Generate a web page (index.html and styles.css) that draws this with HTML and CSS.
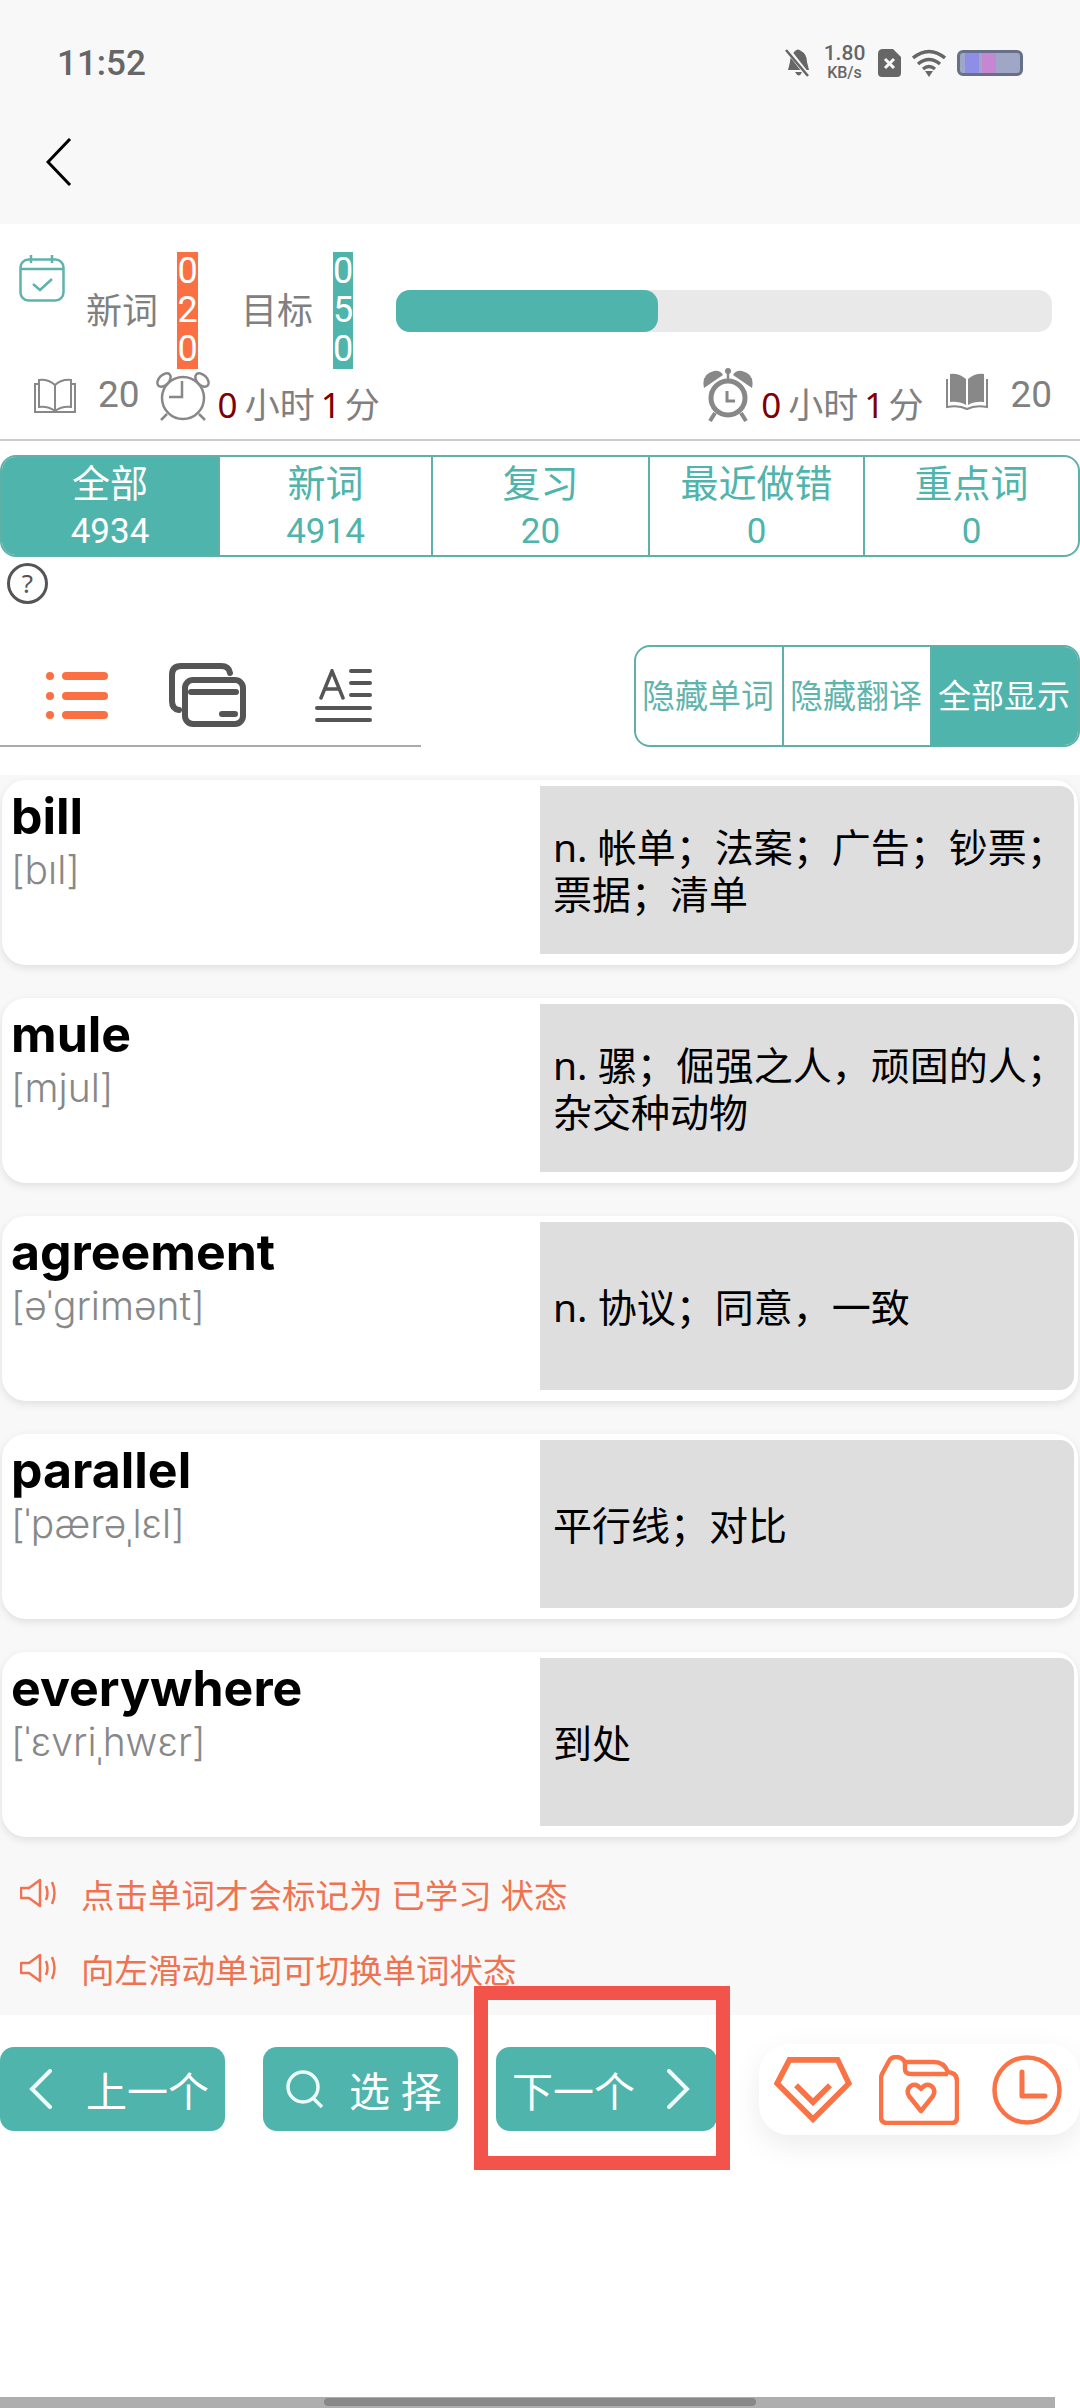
FILE: index.html
```html
<!DOCTYPE html>
<html lang="zh-CN">
<head>
    <meta charset="UTF-8">
    <title>单词列表</title>
    <link rel="stylesheet" href="styles.css">
</head>
<body>
<div class="page">
    <header class="header">
        <div class="status-bar">
            <span class="time">11:52</span>
            <div class="status-icons">
                <svg class="ic-bell" width="26" height="30" viewBox="0 0 26 30">
                    <path d="M10 3 Q13 0 16 3 Q22 6 22 14 L24 22 H3 L5 14 Q5 8 10 3 Z M10 24 H17 Q14 31 10 24 Z" fill="#666"/>
                    <path d="M2 1 L24 29" stroke="#f8f8f8" stroke-width="5"/>
                    <path d="M1 2 L23 28" stroke="#666" stroke-width="2.5"/>
                </svg>
                <div class="speed"><span>1.80</span><span class="speed-unit">KB/s</span></div>
                <svg class="ic-sim" width="23" height="28" viewBox="0 0 23 28">
                    <path d="M5 0 H15 L23 8 V24 Q23 28 19 28 H4 Q0 28 0 24 V5 Q0 0 5 0 Z" fill="#666"/>
                    <path d="M7 10 L16 19 M16 10 L7 19" stroke="#f8f8f8" stroke-width="3"/>
                </svg>
                <svg width="34" height="28" viewBox="0 0 34 28">
                    <g fill="none" stroke="#666" stroke-width="3.5">
                        <path d="M1 9 Q17 -4 33 9"/>
                        <path d="M6 15 Q17 6 28 15"/>
                        <path d="M11 20 Q17 15 23 20"/>
                    </g>
                    <path d="M13 22 H21 L17 28 Z" fill="#666"/>
                </svg>
                <div class="battery"><i class="band-a"></i><i class="band-b"></i></div>
            </div>
        </div>
        <div class="top-bar">
            <svg width="26" height="48" viewBox="0 0 26 48">
                <path d="M24 1 L2 24 L24 47" fill="none" stroke="#000" stroke-width="3"/>
            </svg>
        </div>
    </header>

    <section class="summary">
        <div class="goal-row">
            <svg class="ic-calendar" width="46" height="47" viewBox="0 0 46 47">
                <g fill="none" stroke="#5fb3ac" stroke-width="2.5">
                    <rect x="1.5" y="4.5" width="43" height="41" rx="8"/>
                    <path d="M1.5 14 H44.5 M12 0 V8 M33 0 V8"/>
                    <path d="M14 29 L21 35 L33 24"/>
                </g>
            </svg>
            <span class="goal-label first">新词</span>
            <div class="digits orange"><span>0</span><span>2</span><span>0</span></div>
            <span class="goal-label second">目标</span>
            <div class="digits teal"><span>0</span><span>5</span><span>0</span></div>
            <div class="progress"><div class="progress-fill"></div></div>
        </div>
        <div class="stat-row">
            <div class="stat">
                <svg width="42" height="36" viewBox="0 0 42 36">
                    <g fill="none" stroke="#888" stroke-width="2">
                        <path d="M21 7 Q14 1 5 2 V29 Q14 28 21 33 Q28 28 37 29 V2 Q28 1 21 7 Z"/>
                        <path d="M21 7 V33 M5 6 H1 V34 H41 V6 H37"/>
                    </g>
                </svg>
                <span class="stat-num">20</span>
                <svg class="ic-alarm" width="56" height="52" viewBox="0 0 56 52">
                    <g fill="none" stroke="#888" stroke-width="2.5">
                        <circle cx="28" cy="28" r="21"/>
                        <ellipse cx="9" cy="10" rx="8" ry="5" transform="rotate(-45 9 10)"/>
                        <ellipse cx="47" cy="10" rx="8" ry="5" transform="rotate(45 47 10)"/>
                        <path d="M27 11 V27 H14 M12 44 L6 50 M44 44 L50 50"/>
                    </g>
                </svg>
                <span class="duration"><b>0</b>小时<b class="minutes">1</b>分</span>
            </div>
            <div class="stat">
                <svg class="ic-alarm-solid" width="52" height="54" viewBox="0 0 52 54">
                    <g fill="#888">
                        <path d="M2 20 Q-1 6 12 3 Q18 2 21 7 Z"/>
                        <path d="M50 20 Q53 6 40 3 Q34 2 31 7 Z"/>
                        <circle cx="26" cy="3" r="3"/>
                    </g>
                    <g fill="none" stroke="#888">
                        <circle cx="26" cy="30" r="17" stroke-width="5"/>
                        <path d="M26 3 V12" stroke-width="2.5"/>
                        <path d="M25 23 V33 H33" stroke-width="3"/>
                        <path d="M13 45 L8 53 M39 45 L44 53" stroke-width="4"/>
                    </g>
                </svg>
                <span class="duration"><b>0</b>小时<b class="minutes">1</b>分</span>
                <svg class="ic-book-solid" width="42" height="37" viewBox="0 0 42 37">
                    <path d="M20 6 Q13 0 4 1 V29 Q13 28 20 32 Z M22 6 Q29 0 38 1 V29 Q29 28 22 32 Z" fill="#888"/>
                    <path d="M1 6 V34 Q13 32 21 36 Q29 32 41 34 V6" fill="none" stroke="#888" stroke-width="2"/>
                </svg>
                <span class="stat-num">20</span>
            </div>
        </div>
    </section>

    <nav class="tabs">
        <div class="tab active"><span class="tab-name">全部</span><span class="tab-count">4934</span></div>
        <div class="tab"><span class="tab-name">新词</span><span class="tab-count">4914</span></div>
        <div class="tab"><span class="tab-name">复习</span><span class="tab-count">20</span></div>
        <div class="tab"><span class="tab-name">最近做错</span><span class="tab-count">0</span></div>
        <div class="tab"><span class="tab-name">重点词</span><span class="tab-count">0</span></div>
    </nav>
    <div class="help">?</div>

    <div class="toolbar">
        <div class="view-tabs">
            <svg width="62" height="47" viewBox="0 0 62 47">
                <g fill="#fb7043">
                    <circle cx="4" cy="4" r="4"/><circle cx="4" cy="24" r="4"/><circle cx="4" cy="43" r="4"/>
                    <rect x="16" y="0" width="46" height="8" rx="4"/>
                    <rect x="16" y="20" width="46" height="8" rx="4"/>
                    <rect x="16" y="39" width="46" height="8" rx="4"/>
                </g>
            </svg>
            <svg class="ic-cards" width="77" height="64" viewBox="0 0 77 64">
                <g fill="none" stroke="#555" stroke-width="6" stroke-linecap="round">
                    <path d="M10 47 Q3 46 3 38 V12 Q3 3 12 3 H52 Q60 3 61 10"/>
                    <rect x="16" y="17" width="58" height="44" rx="8"/>
                    <path d="M22 29 H67 M53 51 H66"/>
                </g>
            </svg>
            <svg class="ic-text" width="57" height="53" viewBox="0 0 57 53">
                <g fill="none" stroke="#555" stroke-width="4" stroke-linecap="round">
                    <path d="M6 29 L17 2 L28 29 M10 20 H24" stroke-width="3.5"/>
                    <path d="M36 2 H55 M36 14 H55 M36 26 H55"/>
                    <path d="M2 39 H55 M2 51 H55"/>
                </g>
            </svg>
        </div>
        <div class="segments">
            <div class="segment">隐藏单词</div>
            <div class="segment">隐藏翻译</div>
            <div class="segment active">全部显示</div>
        </div>
    </div>

    <main class="word-area">
        <div class="word-list">
            <div class="word-card">
                <div class="word-info"><div class="word">bill</div><div class="phonetic">[bıl]</div></div>
                <div class="meaning">n. 帐单；法案；广告；钞票；票据；清单</div>
            </div>
            <div class="word-card">
                <div class="word-info"><div class="word">mule</div><div class="phonetic">[mjul]</div></div>
                <div class="meaning">n. 骡；倔强之人，顽固的人；杂交种动物</div>
            </div>
            <div class="word-card">
                <div class="word-info"><div class="word">agreement</div><div class="phonetic">[əˈgrimənt]</div></div>
                <div class="meaning">n. 协议；同意，一致</div>
            </div>
            <div class="word-card">
                <div class="word-info"><div class="word">parallel</div><div class="phonetic">[ˈpærəˌlɛl]</div></div>
                <div class="meaning">平行线；对比</div>
            </div>
            <div class="word-card">
                <div class="word-info"><div class="word">everywhere</div><div class="phonetic">[ˈɛvriˌhwɛr]</div></div>
                <div class="meaning">到处</div>
            </div>
        </div>
        <div class="hint hint-first">
            <svg width="39" height="30" viewBox="0 0 39 30">
                <g fill="none" stroke="#ef7350" stroke-width="2.5">
                    <path d="M1 10 H9 L20 2 V28 L9 20 H1 Z" stroke-linejoin="round"/>
                    <path d="M26 8 Q29 15 26 22 M32 4 Q37 15 32 26"/>
                </g>
            </svg>
            <span>点击单词才会标记为 已学习 状态</span>
        </div>
        <div class="hint">
            <svg width="39" height="30" viewBox="0 0 39 30">
                <g fill="none" stroke="#ef7350" stroke-width="2.5">
                    <path d="M1 10 H9 L20 2 V28 L9 20 H1 Z" stroke-linejoin="round"/>
                    <path d="M26 8 Q29 15 26 22 M32 4 Q37 15 32 26"/>
                </g>
            </svg>
            <span>向左滑动单词可切换单词状态</span>
        </div>
    </main>

    <footer class="actions">
        <div class="btn btn-prev">
            <svg width="23" height="40" viewBox="0 0 23 40"><path d="M21 2 L3 20 L21 38" fill="none" stroke="#eefaf8" stroke-width="4" stroke-linecap="round"/></svg>
            <span>上一个</span>
        </div>
        <div class="btn btn-select">
            <svg width="38" height="38" viewBox="0 0 38 38"><path d="M17 2 A15 15 0 1 0 17 32 A15 15 0 1 0 17 2 Z M27 28 L36 37" fill="none" stroke="#eefaf8" stroke-width="3.5"/></svg>
            <span>选 择</span>
        </div>
        <div class="btn btn-next">
            <span>下一个</span>
            <svg width="23" height="40" viewBox="0 0 23 40"><path d="M2 2 L20 20 L2 38" fill="none" stroke="#eefaf8" stroke-width="4" stroke-linecap="round"/></svg>
        </div>
        <div class="quick-pill">
            <svg width="78" height="66" viewBox="-3 -3 82 70">
                <g fill="none" stroke="#f97346" stroke-width="6">
                    <path d="M13 0 H64 L76 25 L38 63 L0 25 Z"/>
                    <path d="M20 27 L38 45 L56 27"/>
                </g>
            </svg>
            <svg class="ic-folder" width="80" height="70" viewBox="-2 -2 80 70">
                <g fill="none" stroke="#f97346" stroke-width="4.5" stroke-linejoin="round">
                    <path d="M1 17 L8 4 Q10 0 15 0 Q21 0 24 5 H53 Q63 5 67 15 Q76 16 76 24 V60 Q76 66 71 66 H6 Q0 66 0 60 V20 Z"/>
                    <path d="M24 5 V12 Q24 17 30 17 H67"/>
                    <path d="M40 54 L28 39 C24 32 30 27 35 28 C38 29 39 31 40 32 C41 31 42 29 45 28 C50 27 56 32 52 39 Z"/>
                </g>
            </svg>
            <svg class="ic-clock" width="70" height="70" viewBox="0 0 70 70">
                <g fill="none" stroke="#f97346" stroke-linecap="round">
                    <circle cx="35" cy="35" r="32.5" stroke-width="4.5"/>
                    <path d="M30 17 V41 H53" stroke-width="5" stroke-linejoin="round"/>
                </g>
            </svg>
        </div>
    </footer>
    <div class="nav-bar"><div class="nav-handle"></div></div>

    <div class="highlight"></div>
</div>
</body>
</html>
```

FILE: styles.css
```css
* {
    box-sizing: border-box;
}

html, body {
    margin: 0;
    padding: 0;
    background-color: #fff;
}

.page {
    position: relative;
    width: 1080px;
    height: 2408px;
    overflow: hidden;
    display: flex;
    flex-direction: column;
    font-family: "Noto Sans", "Noto Sans CJK SC", sans-serif;
    color: #000;
}

svg {
    display: block;
    flex-shrink: 0;
}

/* header */
.header {
    height: 224px;
    background-color: #f8f8f8;
    padding-top: 40px;
}

.status-bar {
    height: 46px;
    display: flex;
    align-items: center;
    justify-content: space-between;
    padding: 0 57px;
}

.time {
    font-family: Roboto, sans-serif;
    font-size: 35px;
    font-weight: 500;
    color: #666;
}

.status-icons {
    display: flex;
    align-items: center;
}

.speed {
    display: flex;
    flex-direction: column;
    align-items: center;
    width: 43px;
    margin: 0 12px;
    font-family: Roboto, sans-serif;
    font-weight: 500;
    font-size: 21px;
    line-height: 19px;
    color: #666;
}

.speed-unit {
    font-size: 16px;
}

.ic-sim {
    margin-right: 11px;
}

.battery {
    position: relative;
    width: 66px;
    height: 26px;
    margin-left: 11px;
    border: 3px solid #667088;
    border-radius: 6px;
    background-color: #9fa6c6;
    overflow: hidden;
}

.battery i {
    position: absolute;
    top: 0;
    bottom: 0;
}

.band-a {
    left: 5px;
    width: 14px;
    background-color: #8e8ee6;
}

.band-b {
    left: 22px;
    width: 14px;
    background-color: #c587d2;
}

.top-bar {
    padding: 52px 0 0 46px;
}

/* summary */
.summary {
    padding-top: 28px;
    padding-bottom: 16px;
    border-bottom: 2px solid #ccc;
}

.goal-row {
    display: flex;
    align-items: center;
    height: 117px;
    padding-left: 19px;
}

.ic-calendar {
    align-self: flex-start;
    margin-top: 3px;
}

.goal-label {
    font-size: 36px;
    line-height: 1;
    color: #808080;
}

.goal-label.first {
    margin-left: 21px;
}

.goal-label.second {
    margin-left: 43px;
}

.digits {
    display: flex;
    flex-direction: column;
    width: 21px;
    height: 117px;
    margin-left: 19px;
    font-family: Roboto, sans-serif;
    font-size: 36px;
    color: #fff;
    text-align: center;
}

.digits span {
    height: 39px;
    line-height: 39px;
}

.digits.orange {
    background-color: #fb7043;
}

.digits.teal {
    background-color: #4fb4ab;
    margin-left: 20px;
    width: 20px;
}

.progress {
    flex: 1;
    height: 42px;
    margin: 0 28px 0 43px;
    border-radius: 14px;
    background-color: #e9e9e9;
}

.progress-fill {
    width: 262px;
    height: 42px;
    border-radius: 14px;
    background-color: #4fb4ab;
}

.stat-row {
    display: flex;
    justify-content: space-between;
    height: 54px;
    padding: 0 28px 0 34px;
}

.stat {
    display: flex;
    align-items: center;
}

.stat-num {
    position: relative;
    top: -1px;
    margin-left: 22px;
    font-family: Roboto, sans-serif;
    font-size: 37px;
    line-height: 54px;
    color: #808080;
}

.ic-alarm {
    margin-left: 15px;
}

.duration {
    margin-left: 7px;
    padding-top: 12px;
    font-size: 35px;
    color: #808080;
    white-space: nowrap;
}

.duration b {
    margin-right: 7px;
    font-weight: 400;
    color: #800000;
}

.duration .minutes {
    margin: 0 4px 0 6px;
}

.ic-alarm-solid {
    margin-top: -2px;
}

.ic-book-solid {
    margin-left: 23px;
    margin-top: -10px;
}

/* category tabs */
.tabs {
    display: grid;
    grid-template-columns: 216px 213px 217px 215px 215px;
    height: 102px;
    margin-top: 14px;
    border: 2px solid #5fb0a9;
    border-radius: 16px;
    overflow: hidden;
}

.tab {
    display: flex;
    flex-direction: column;
    align-items: center;
    color: #4fb4ab;
    border-left: 2px solid #5fb0a9;
}

.tab:first-child {
    border-left: none;
}

.tab.active {
    background-color: #4fb4ab;
    color: #fff;
}

.tab-name {
    height: 50px;
    font-size: 38px;
    line-height: 50px;
}

.tab-count {
    margin-top: 2px;
    font-family: Roboto, sans-serif;
    font-size: 35px;
    line-height: 46px;
}

.help {
    width: 41px;
    height: 41px;
    margin: 6px 0 0 7px;
    border: 3px solid #555;
    border-radius: 50%;
    font-size: 26px;
    line-height: 34px;
    text-align: center;
    color: #555;
}

/* toolbar */
.toolbar {
    display: flex;
    justify-content: space-between;
    height: 102px;
    margin-top: 41px;
}

.view-tabs {
    display: flex;
    align-items: center;
    width: 421px;
    padding-left: 46px;
    border-bottom: 2px solid #aaa;
}

.ic-cards {
    margin-left: 61px;
}

.ic-text {
    margin-left: 69px;
}

.segments {
    display: grid;
    grid-template-columns: 146px 148px 148px;
    width: 446px;
    border: 2px solid #5fb0a9;
    border-radius: 16px;
    overflow: hidden;
}

.segment {
    display: flex;
    align-items: center;
    justify-content: center;
    padding: 0 2px 4px 0;
    font-size: 33px;
    white-space: nowrap;
    color: #5fb5ad;
    border-left: 2px solid #5fb0a9;
}

.segment:first-child {
    border-left: none;
}

.segment.active {
    background-color: #4fb4ab;
    color: #fff;
}

/* word list */
.word-area {
    height: 1240px;
    margin-top: 28px;
    padding-top: 5px;
    background-color: #f8f8f8;
}

.word-list {
    display: flex;
    flex-direction: column;
    gap: 33px;
    padding: 0 2px;
}

.word-card {
    display: flex;
    height: 185px;
    padding: 6px 4px 11px 0;
    border-radius: 24px;
    background-color: #fff;
    box-shadow: 0 3px 8px rgba(0, 0, 0, 0.1);
}

.word-info {
    flex: 1;
    padding: 0 0 0 9px;
}

.word {
    font-family: Inter, sans-serif;
    font-weight: 700;
    font-size: 50px;
    line-height: 60px;
    color: #000;
}

.phonetic {
    font-family: Inter, sans-serif;
    font-weight: 300;
    font-size: 39px;
    line-height: 47px;
    color: #888;
}

.meaning {
    display: flex;
    align-items: center;
    width: 534px;
    padding: 0 0 0 13px;
    border-radius: 0 14px 14px 0;
    background-color: #dedede;
    font-size: 39px;
    line-height: 47px;
    color: #000;
}

.hint {
    display: flex;
    align-items: center;
    height: 40px;
    margin-top: 35px;
    padding-left: 20px;
    font-size: 33.5px;
    color: #ef7350;
}

.hint-first {
    margin-top: 36px;
}

.hint svg {
    margin-right: 22px;
}

/* bottom actions */
.actions {
    display: flex;
    align-items: flex-start;
    height: 382px;
    padding-top: 32px;
}

.btn {
    display: flex;
    align-items: center;
    height: 84px;
    border-radius: 14px;
    background-color: #4fb4ab;
    font-size: 41px;
    color: #fff;
    white-space: nowrap;
}

.btn-prev {
    width: 225px;
    padding-left: 29px;
}

.btn-prev span {
    margin-left: 34px;
}

.btn-select {
    width: 195px;
    margin-left: 38px;
    padding-left: 23px;
}

.btn-select span {
    margin-left: 25px;
}

.btn-next {
    width: 221px;
    margin-left: 38px;
    padding-left: 16px;
}

.btn-next svg {
    margin-left: 32px;
}

.quick-pill {
    display: flex;
    align-items: center;
    width: 321px;
    height: 91px;
    margin: -3px 0 0 42px;
    padding-left: 15px;
    border-radius: 30px;
    background-color: #fff;
    box-shadow: 0 10px 30px rgba(0, 0, 0, 0.08);
}

.ic-folder {
    margin-left: 27px;
}

.ic-clock {
    margin-left: 33px;
}

.nav-bar {
    width: 1055px;
    height: 11px;
    padding: 1px 0 0 324px;
    background-color: #aeaeae;
}

.nav-handle {
    width: 432px;
    height: 8px;
    border-radius: 4px;
    background-color: #888;
}

/* annotation box drawn over the next button */
.highlight {
    position: absolute;
    left: 474px;
    top: 1986px;
    width: 256px;
    height: 184px;
    border: 14px solid #f2544c;
}
```
